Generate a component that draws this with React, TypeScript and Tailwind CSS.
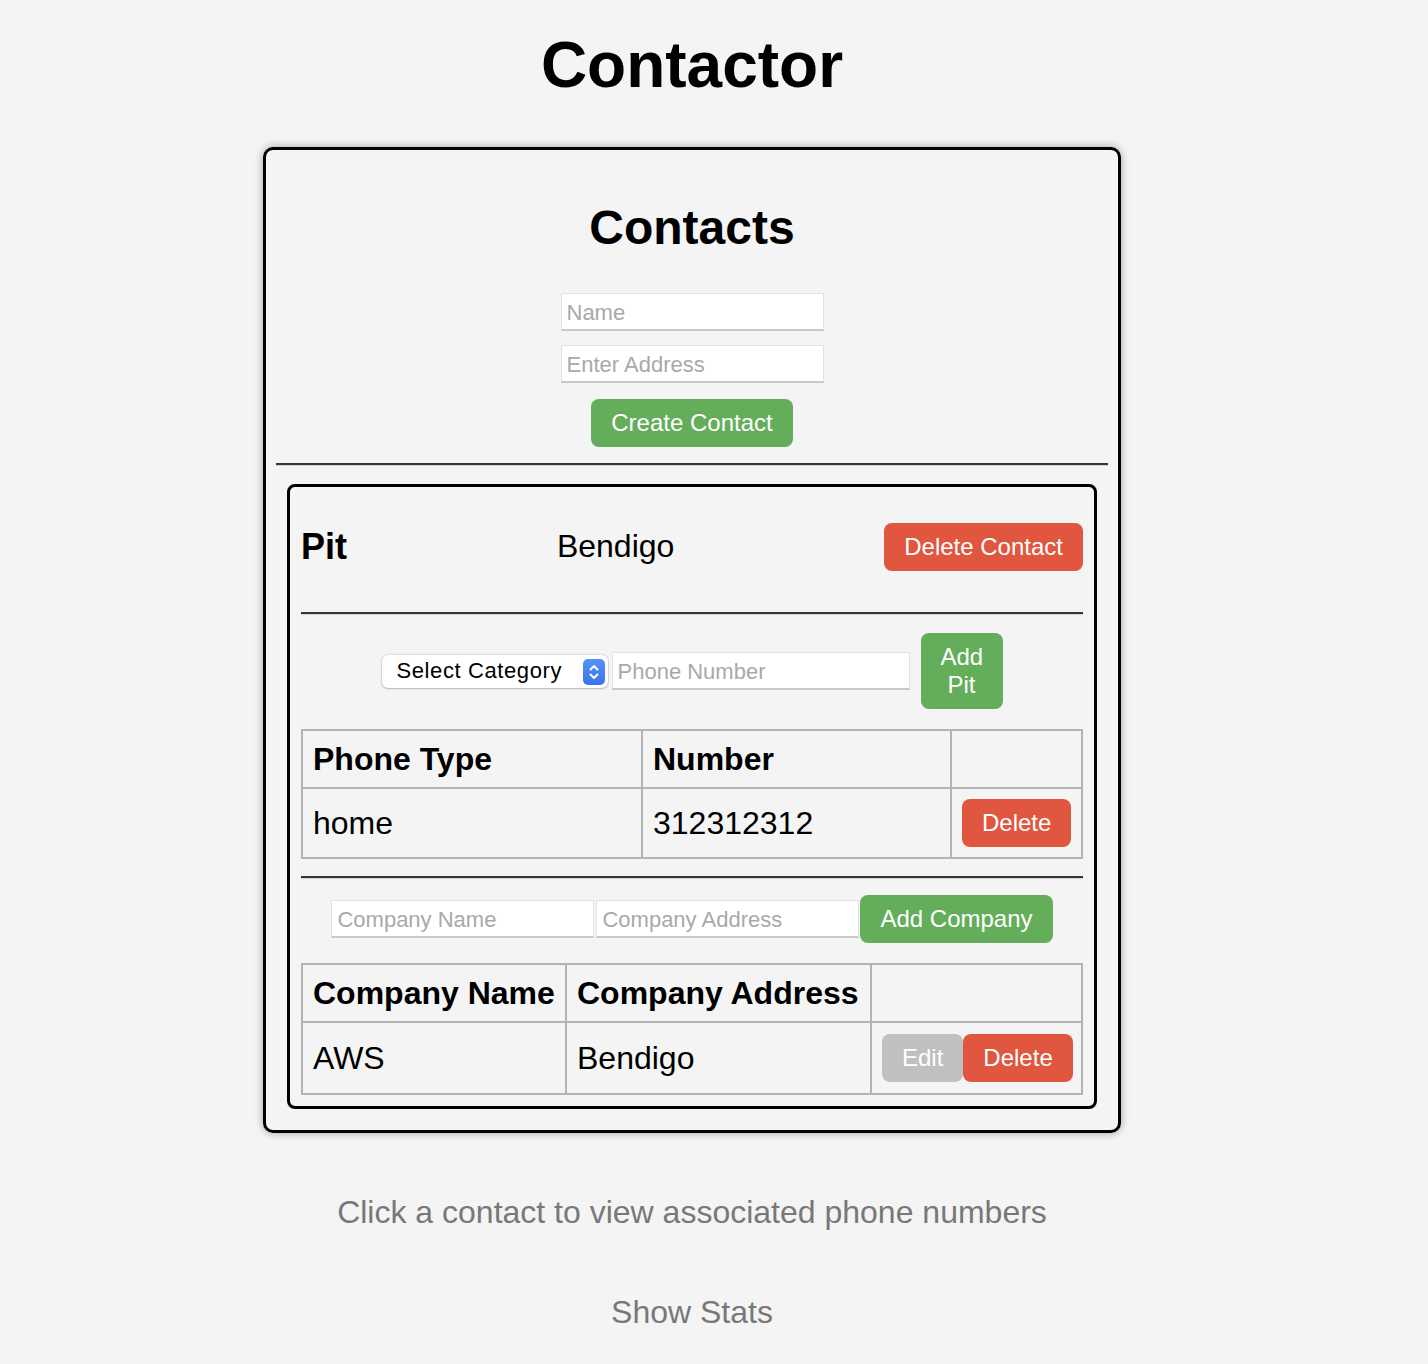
import React from 'react';

const btn = 'rounded-lg px-[20px] py-[10px] text-[24px] leading-[28px] text-white';
const green = 'bg-[#63ad5b]';
const red = 'bg-[#e0563f]';
const input =
  'h-[38px] w-[263px] bg-white border border-[#e3e3e3] border-b-2 border-b-[#c8c8c8] pl-[5px] pt-[3px] text-[22px] text-black placeholder:text-[#a9a9a9] outline-none';
const th = 'border-2 border-[#b3b3b3] px-[10px] py-[10px] text-left text-[32px] leading-[36px] font-bold';
const td = 'border-2 border-[#b3b3b3] px-[10px] py-[10px] text-left text-[32px] leading-[37px]';

const Rule = ({ className = '' }: { className?: string }) => (
  <div className={`border-t-2 border-t-[#363636] border-b border-b-[#d2d2d2] ${className}`} />
);

const SelectBox = () => (
  <div className="relative flex h-[33px] w-[226px] items-center rounded-[6px] bg-white pl-[15px] shadow-[0_0_2px_rgba(0,0,0,0.25),0_1px_2px_rgba(0,0,0,0.2)]">
    <span className="text-[22px] leading-none tracking-[0.6px] text-black">Select Category</span>
    <div className="absolute right-[3px] top-[4px] flex h-[26px] w-[22px] items-center justify-center rounded-[5px] bg-gradient-to-b from-[#5592f5] to-[#3a74e8]">
      <svg width="12" height="18" viewBox="0 0 12 18" fill="none" stroke="white" strokeWidth="2" strokeLinecap="round" strokeLinejoin="round">
        <path d="M2.5 6.5 L6 3 L9.5 6.5" />
        <path d="M2.5 11.5 L6 15 L9.5 11.5" />
      </svg>
    </div>
  </div>
);

export default function App() {
  return (
    <div className="min-h-screen bg-[#f4f4f4] font-['Liberation_Sans',Arial,sans-serif] text-black">
      <div className="flex w-[1384px] flex-col items-center pb-[30px]">
        <h1 className="mt-[28px] text-[64px] font-bold leading-[74px]">Contactor</h1>

        <div className="mt-[45px] w-[858px] rounded-[10px] border-[3px] border-black p-[10px] shadow-[0_0_8px_rgba(0,0,0,0.35)]">
          <h2 className="mt-[40px] text-center text-[48px] font-bold leading-[55px]">Contacts</h2>
          <div className="flex flex-col items-center">
            <input className={`mt-[38px] ${input}`} placeholder="Name" />
            <input className={`mt-[14px] ${input}`} placeholder="Enter Address" />
            <button className={`mt-[16px] ${btn} ${green}`}>Create Contact</button>
          </div>
          <Rule className="mt-[16px]" />

          <div className="mx-[11px] mb-[11px] mt-[18px] rounded-lg border-[3px] border-black px-[11px] pb-[11px] pt-[36px]">
            <div className="flex h-[47px] items-center justify-between">
              <span className="text-[36px] font-bold leading-[41px]">Pit</span>
              <span className="text-[32px] leading-[37px]">Bendigo</span>
              <button className={`${btn} ${red}`}>Delete Contact</button>
            </div>
            <Rule className="mt-[42px]" />

            <div className="mt-[18px] flex items-center justify-center">
              <SelectBox />
              <input className={`ml-[4px] ${input} w-[298px]`} placeholder="Phone Number" />
              <button className={`ml-[11px] w-[82px] ${btn} ${green}`}>Add Pit</button>
            </div>

            <table className="mt-[20px] w-full table-fixed border-collapse border-2 border-[#b3b3b3]">
              <colgroup>
                <col className="w-[340px]" />
                <col className="w-[309px]" />
                <col />
              </colgroup>
              <thead>
                <tr>
                  <th className={th}>Phone Type</th>
                  <th className={th}>Number</th>
                  <th className={th}></th>
                </tr>
              </thead>
              <tbody>
                <tr>
                  <td className={td}>home</td>
                  <td className={td}>312312312</td>
                  <td className={td}>
                    <button className={`${btn} ${red}`}>Delete</button>
                  </td>
                </tr>
              </tbody>
            </table>

            <Rule className="mt-[17px]" />

            <div className="mt-[16px] flex items-center justify-center">
              <input className={input} placeholder="Company Name" />
              <input className={`ml-[2px] ${input}`} placeholder="Company Address" />
              <button className={`ml-[1px] ${btn} ${green}`}>Add Company</button>
            </div>

            <table className="mt-[20px] w-full table-fixed border-collapse border-2 border-[#b3b3b3]">
              <colgroup>
                <col className="w-[264px]" />
                <col className="w-[305px]" />
                <col />
              </colgroup>
              <thead>
                <tr>
                  <th className={th}>Company Name</th>
                  <th className={th}>Company Address</th>
                  <th className={th}></th>
                </tr>
              </thead>
              <tbody>
                <tr>
                  <td className={`${td} py-[11px]`}>AWS</td>
                  <td className={`${td} py-[11px]`}>Bendigo</td>
                  <td className={`${td} py-[11px] whitespace-nowrap`}>
                    <button className={`${btn} bg-[#c0c0c0]`}>Edit</button>
                    <button className={`${btn} ${red}`}>Delete</button>
                  </td>
                </tr>
              </tbody>
            </table>
          </div>
        </div>

        <p className="mt-[61px] text-[32px] leading-[37px] text-[#787878]">
          Click a contact to view associated phone numbers
        </p>
        <button className="mt-[63px] text-[32px] leading-[37px] text-[#787878]">Show Stats</button>
      </div>
    </div>
  );
}
